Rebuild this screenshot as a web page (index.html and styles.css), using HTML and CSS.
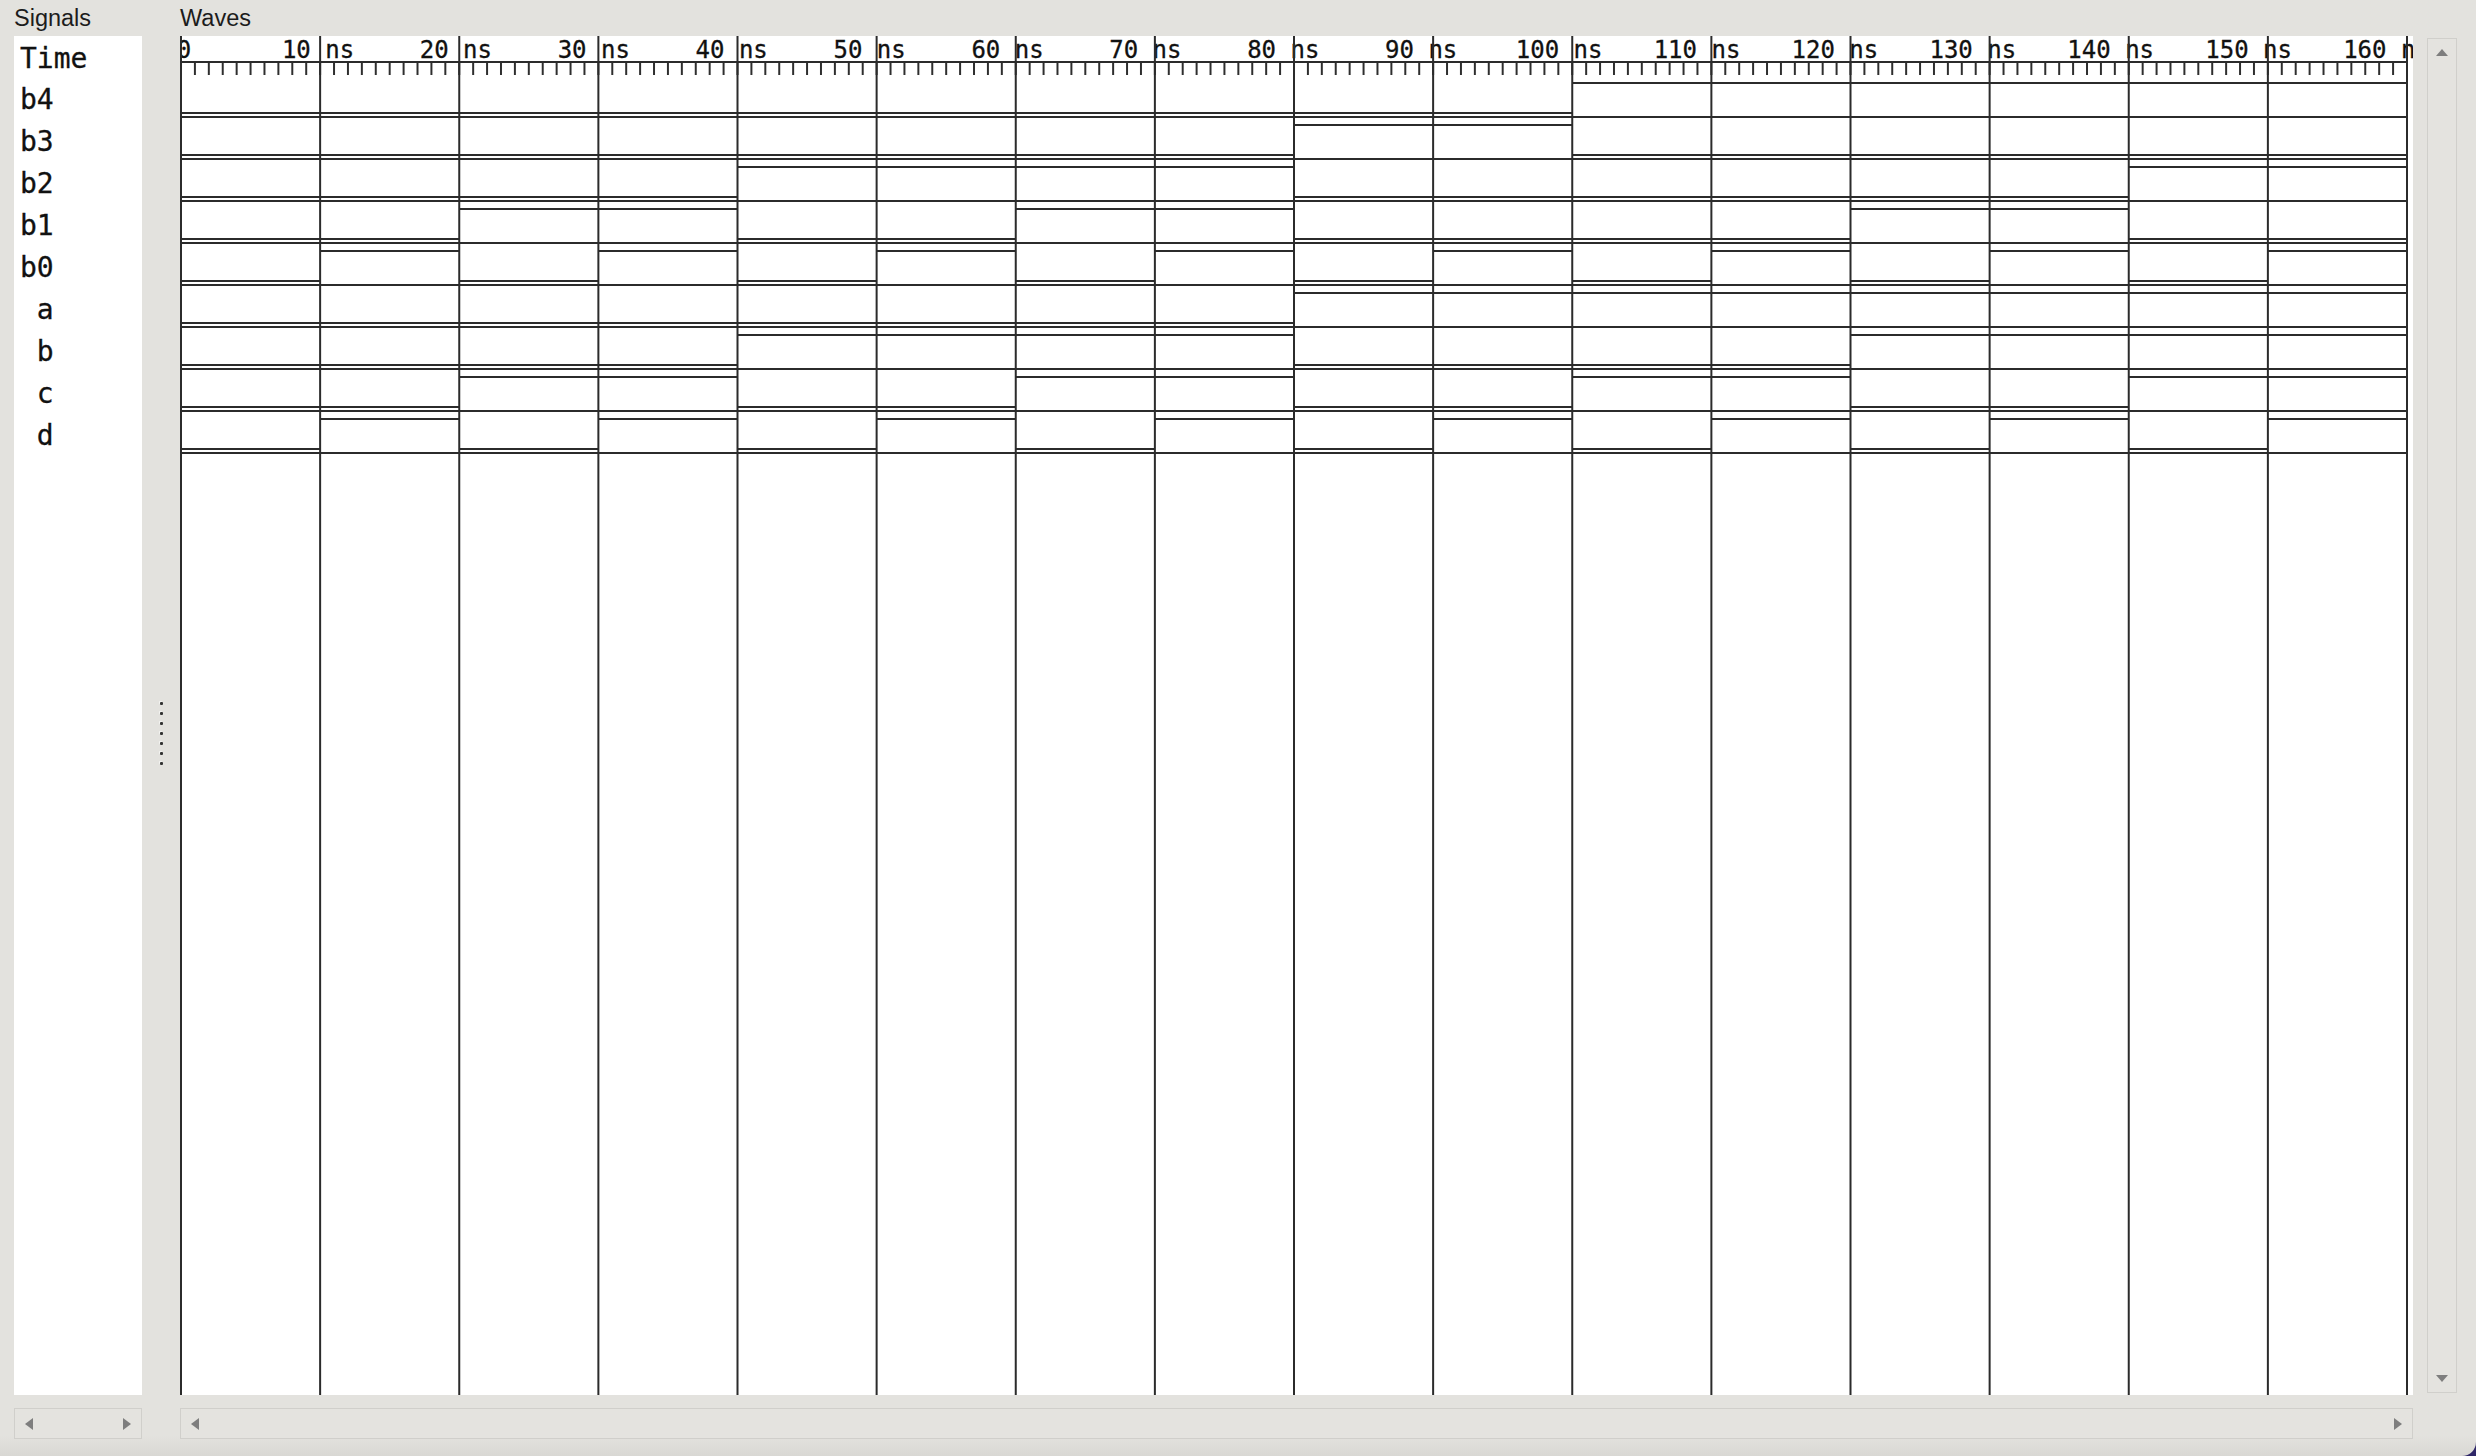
FILE: index.html
```html
<!DOCTYPE html>
<html>
<head>
<meta charset="utf-8">
<title>Waves</title>
<link rel="stylesheet" href="styles.css">
</head>
<body>
<div class="window">
  <div class="title title-signals">Signals</div>
  <div class="title title-waves">Waves</div>

  <div class="signals">
    <div class="sig-row time">Time</div>
    <div class="sig-row">b4</div>
    <div class="sig-row">b3</div>
    <div class="sig-row">b2</div>
    <div class="sig-row">b1</div>
    <div class="sig-row">b0</div>
    <div class="sig-row"> a</div>
    <div class="sig-row"> b</div>
    <div class="sig-row"> c</div>
    <div class="sig-row"> d</div>
  </div>

  <div class="sash">
    <span class="dot"></span><span class="dot"></span><span class="dot"></span><span class="dot"></span><span class="dot"></span><span class="dot"></span><span class="dot"></span>
  </div>

  <div class="waves">
    <svg class="canvas" width="2233" height="1359" viewBox="0 0 2233 1359" xmlns="http://www.w3.org/2000/svg">
      <defs>
        <pattern id="ticks" x="0" y="0" width="13.9125" height="13" patternUnits="userSpaceOnUse">
          <rect x="0" y="0" width="2" height="13" class="tick"></rect>
        </pattern>
      </defs>
      <g class="ruler-labels">
        <text x="4" y="22">0</text>
        <text x="138" y="22">10 ns</text>
        <text x="275.9" y="22">20 ns</text>
        <text x="413.8" y="22">30 ns</text>
        <text x="551.7" y="22">40 ns</text>
        <text x="689.6" y="22">50 ns</text>
        <text x="827.5" y="22">60 ns</text>
        <text x="965.4" y="22">70 ns</text>
        <text x="1103.3" y="22">80 ns</text>
        <text x="1241.2" y="22">90 ns</text>
        <text x="1379.1" y="22">100 ns</text>
        <text x="1517" y="22">110 ns</text>
        <text x="1654.9" y="22">120 ns</text>
        <text x="1792.8" y="22">130 ns</text>
        <text x="1930.7" y="22">140 ns</text>
        <text x="2068.6" y="22">150 ns</text>
        <text x="2206.5" y="22">160 ns</text>
      </g>
      <rect x="0" y="26" width="2228" height="13" fill="url(#ticks)"></rect>
      <path class="ln" d="M0 26H2227"></path>
      <path class="ln" d="M1 81H2227M1 123H2227M1 165H2227M1 207H2227M1 249H2227M1 291H2227M1 333H2227M1 375H2227M1 417H2227"></path>
      <!-- b4 -->
      <path class="ln" d="M1 77H1392.25M1392.25 47H2227"></path>
      <!-- b3 -->
      <path class="ln" d="M1 119H1114M1114 89H1392.25M1392.25 119H2227"></path>
      <!-- b2 -->
      <path class="ln" d="M1 161H557.5M557.5 131H1114M1114 161H1948.75M1948.75 131H2227"></path>
      <!-- b1 -->
      <path class="ln" d="M1 203H279.25M279.25 173H557.5M557.5 203H835.75M835.75 173H1114M1114 203H1670.5M1670.5 173H1948.75M1948.75 203H2227"></path>
      <!-- b0 -->
      <path class="ln" d="M1 245H140.125M140.125 215H279.25M279.25 245H418.375M418.375 215H557.5M557.5 245H696.625M696.625 215H835.75M835.75 245H974.875M974.875 215H1114M1114 245H1253.125M1253.125 215H1392.25M1392.25 245H1531.375M1531.375 215H1670.5M1670.5 245H1809.625M1809.625 215H1948.75M1948.75 245H2087.875M2087.875 215H2227"></path>
      <!-- a -->
      <path class="ln" d="M1 287H1114M1114 257H2227"></path>
      <!-- b -->
      <path class="ln" d="M1 329H557.5M557.5 299H1114M1114 329H1670.5M1670.5 299H2227"></path>
      <!-- c -->
      <path class="ln" d="M1 371H279.25M279.25 341H557.5M557.5 371H835.75M835.75 341H1114M1114 371H1392.25M1392.25 341H1670.5M1670.5 371H1948.75M1948.75 341H2227"></path>
      <!-- d -->
      <path class="ln" d="M1 413H140.125M140.125 383H279.25M279.25 413H418.375M418.375 383H557.5M557.5 413H696.625M696.625 383H835.75M835.75 413H974.875M974.875 383H1114M1114 413H1253.125M1253.125 383H1392.25M1392.25 413H1531.375M1531.375 383H1670.5M1670.5 413H1809.625M1809.625 383H1948.75M1948.75 413H2087.875M2087.875 383H2227"></path>
      <!-- grid -->
      <path class="ln" d="M1 0V1359M140.125 0V1359M279.25 0V1359M418.375 0V1359M557.5 0V1359M696.625 0V1359M835.75 0V1359M974.875 0V1359M1114 0V1359M1253.125 0V1359M1392.25 0V1359M1531.375 0V1359M1670.5 0V1359M1809.625 0V1359M1948.75 0V1359M2087.875 0V1359M2227 0V1359"></path>
    </svg>
  </div>

  <div class="vscroll">
    <span class="arrow up"></span>
    <span class="arrow down"></span>
  </div>

  <div class="hscroll hs-signals">
    <span class="arrow left"></span>
    <span class="arrow right"></span>
  </div>
  <div class="hscroll hs-waves">
    <span class="arrow left"></span>
    <span class="arrow right"></span>
  </div>
</div>
</body>
</html>
```

FILE: styles.css
```css
html, body {
  margin: 0;
  padding: 0;
  background: #2f2768;
}

.window {
  width: 2476px;
  height: 1456px;
  background: linear-gradient(to bottom, #e3e2de 0, #e3e2de 1436px, #d9d8d4 1456px);
  display: grid;
  grid-template-columns: 14px 128px 38px 2233px 14px 30px 19px;
  grid-template-rows: 36px 1359px 13px 31px 17px;
  border-bottom-right-radius: 14px;
  overflow: hidden;
  font-family: "Liberation Sans", Arial, sans-serif;
}

.title {
  grid-row: 1;
  font-size: 23.5px;
  line-height: 36px;
  color: #1c1c1c;
  white-space: nowrap;
}

.title-signals {
  grid-column: 2;
}

.title-waves {
  grid-column: 4;
}

.signals {
  grid-column: 2;
  grid-row: 2;
  background: #ffffff;
  font-family: "DejaVu Sans Mono", monospace;
  font-size: 28px;
  color: #111111;
  -webkit-text-stroke: 0.3px #111111;
  overflow: hidden;
}

.sig-row {
  height: 42px;
  box-sizing: border-box;
  padding: 5.6px 0 0 6px;
  line-height: 36.4px;
  white-space: pre;
}

.sig-row.time {
  height: 40px;
  padding-top: 7.2px;
  line-height: 32.8px;
}

.sash {
  grid-column: 3;
  grid-row: 2;
  display: flex;
  flex-direction: column;
  align-items: center;
  gap: 7px;
  padding-top: 666px;
}

.dot {
  width: 3px;
  height: 3px;
  background: #333333;
  border-radius: 1px;
  box-shadow: -1px -1px 0 #f4f4f2;
}

.waves {
  grid-column: 4;
  grid-row: 2;
  background: #ffffff;
  overflow: hidden;
}

.canvas {
  display: block;
}

.ruler-labels text {
  font-family: "DejaVu Sans Mono", monospace;
  font-size: 24px;
  fill: #111111;
  stroke: #111111;
  stroke-width: 0.3px;
  text-anchor: middle;
}

.tick {
  fill: #2e2e2e;
}

.ln {
  fill: none;
  stroke: #2b2b2b;
  stroke-width: 2;
}

.vscroll {
  grid-column: 6;
  grid-row: 2;
  margin: 2px 0;
  box-sizing: border-box;
  border: 1px solid #d0cfcb;
  background: #e4e3df;
  display: flex;
  flex-direction: column;
  justify-content: space-between;
  align-items: center;
  padding: 10px 0;
}

.hscroll {
  grid-row: 4;
  box-sizing: border-box;
  border: 1px solid #d0cfcb;
  background: #e4e3df;
  display: flex;
  justify-content: space-between;
  align-items: center;
  padding: 0 10px;
}

.hs-signals {
  grid-column: 2;
}

.hs-waves {
  grid-column: 4;
}

.arrow {
  width: 0;
  height: 0;
  display: block;
}

.arrow.up {
  border-left: 6.5px solid transparent;
  border-right: 6.5px solid transparent;
  border-bottom: 7px solid #7e7e7e;
}

.arrow.down {
  border-left: 6.5px solid transparent;
  border-right: 6.5px solid transparent;
  border-top: 7px solid #7e7e7e;
}

.arrow.left {
  border-top: 6.5px solid transparent;
  border-bottom: 6.5px solid transparent;
  border-right: 8px solid #7e7e7e;
}

.arrow.right {
  border-top: 6.5px solid transparent;
  border-bottom: 6.5px solid transparent;
  border-left: 8px solid #7e7e7e;
}
```
